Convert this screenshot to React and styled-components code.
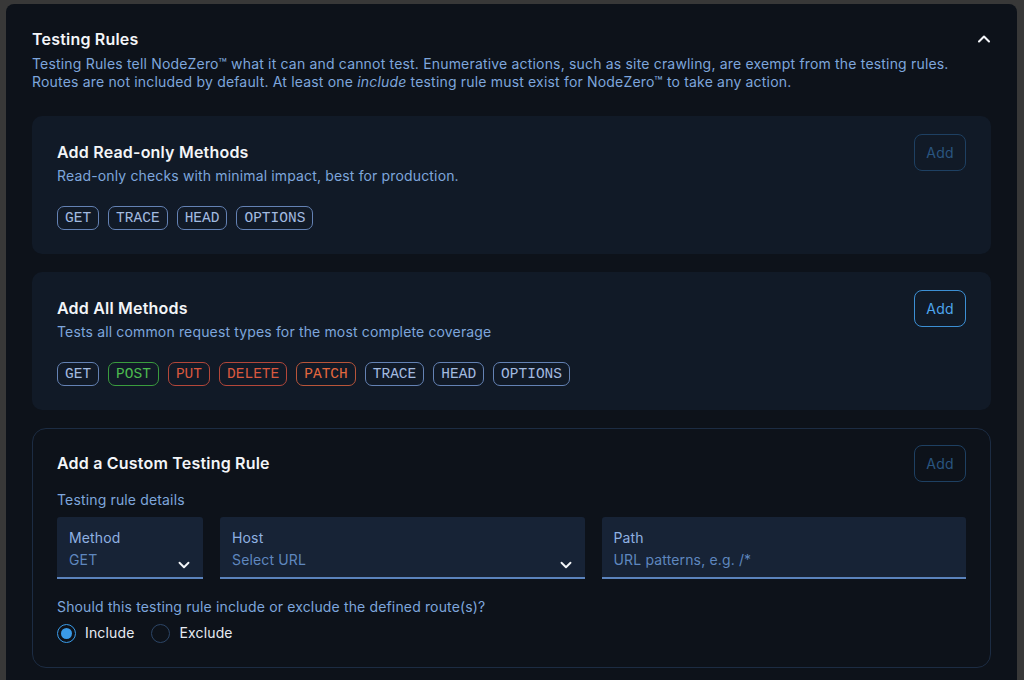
import React from 'react';
import styled, { createGlobalStyle } from 'styled-components';
import { ChevronUp, ChevronDown } from 'lucide-react';

const GlobalStyle = createGlobalStyle`
  html, body {
    margin: 0;
    padding: 0;
    background: #383838;
    font-family: Inter, "Noto Sans", sans-serif;
  }
  * { box-sizing: border-box; }
`;

const readOnly = ['GET', 'TRACE', 'HEAD', 'OPTIONS'];
const allMethods = ['GET', 'POST', 'PUT', 'DELETE', 'PATCH', 'TRACE', 'HEAD', 'OPTIONS'];

const chipTone = {
  POST: 'green',
  PUT: 'red',
  DELETE: 'red',
  PATCH: 'orange',
};

function MethodChips({ items }) {
  return (
    <ChipRow>
      {items.map((m) => (
        <Chip key={m} $tone={chipTone[m] || 'blue'}>{m}</Chip>
      ))}
    </ChipRow>
  );
}

function MethodCard({ title, text, items, active }) {
  return (
    <Card>
      <CardBody>
        <CardTitle>{title}</CardTitle>
        <CardText>{text}</CardText>
        <MethodChips items={items} />
      </CardBody>
      <AddButton $active={active}>Add</AddButton>
    </Card>
  );
}

function App() {
  return (
    <>
      <GlobalStyle />
      <Frame>
        <Panel>
          <Header>
            <div>
              <PanelTitle>Testing Rules</PanelTitle>
              <PanelText>
                Testing Rules tell NodeZero™ what it can and cannot test. Enumerative actions, such as site crawling, are exempt from the testing rules.
                <br />
                Routes are not included by default. At least one <em>include</em> testing rule must exist for NodeZero™ to take any action.
              </PanelText>
            </div>
            <Toggle>
              <ChevronUp size={20} strokeWidth={2.5} />
            </Toggle>
          </Header>

          <Stack>
            <MethodCard
              title="Add Read-only Methods"
              text="Read-only checks with minimal impact, best for production."
              items={readOnly}
            />
            <MethodCard
              title="Add All Methods"
              text="Tests all common request types for the most complete coverage"
              items={allMethods}
              active
            />

            <CustomCard>
              <CustomHead>
                <CardTitle>Add a Custom Testing Rule</CardTitle>
                <AddButton>Add</AddButton>
              </CustomHead>
              <SubLabel>Testing rule details</SubLabel>
              <Fields>
                <Field>
                  <FieldLabel>Method</FieldLabel>
                  <FieldValue>GET</FieldValue>
                  <Caret><ChevronDown size={18} strokeWidth={2.5} /></Caret>
                </Field>
                <Field>
                  <FieldLabel>Host</FieldLabel>
                  <FieldValue>Select URL</FieldValue>
                  <Caret><ChevronDown size={18} strokeWidth={2.5} /></Caret>
                </Field>
                <Field>
                  <FieldLabel>Path</FieldLabel>
                  <FieldValue>URL patterns, e.g. /*</FieldValue>
                </Field>
              </Fields>
              <Question>Should this testing rule include or exclude the defined route(s)?</Question>
              <Radios>
                <RadioOption>
                  <Radio $checked />
                  Include
                </RadioOption>
                <RadioOption>
                  <Radio />
                  Exclude
                </RadioOption>
              </Radios>
            </CustomCard>
          </Stack>
        </Panel>
      </Frame>
    </>
  );
}

export default App;

const Frame = styled.div`
  width: 1024px;
  height: 680px;
  padding: 4px 7px 0 6px;
  overflow: hidden;
`;

const Panel = styled.div`
  background: #0d121a;
  border-radius: 8px 8px 0 0;
  height: 700px;
  padding: 23px 26px 0 26px;
`;

const Header = styled.div`
  display: flex;
  justify-content: space-between;
  align-items: flex-start;
`;

const PanelTitle = styled.h2`
  margin: 0;
  font-size: 16px;
  line-height: 24px;
  font-weight: 600;
  color: #f3f5f8;
  letter-spacing: 0.2px;
`;

const PanelText = styled.p`
  margin: 4px 0 0 0;
  font-size: 14px;
  line-height: 18px;
  color: #7ea6dc;
  white-space: nowrap;
  letter-spacing: 0.18px;
`;

const Toggle = styled.span`
  color: #f3f5f8;
  display: flex;
  margin-top: 2px;
  margin-right: -3px;
`;

const Stack = styled.div`
  display: flex;
  flex-direction: column;
  gap: 18px;
  margin-top: 25px;
`;

const Card = styled.div`
  background: #111a27;
  border-radius: 10px;
  padding: 24px 25px 24px 25px;
  display: flex;
  justify-content: space-between;
  align-items: flex-start;
`;

const CardBody = styled.div`
  display: flex;
  flex-direction: column;
`;

const CardTitle = styled.h3`
  margin: 0;
  font-size: 16px;
  line-height: 24px;
  font-weight: 600;
  color: #f3f5f8;
  letter-spacing: 0.2px;
`;

const CardText = styled.p`
  margin: 2px 0 0 0;
  font-size: 14px;
  line-height: 20px;
  color: #7ea6dc;
  letter-spacing: 0.15px;
`;

const ChipRow = styled.div`
  display: flex;
  gap: 9px;
  margin-top: 20px;
`;

const tones = {
  blue: { border: '#6482b4', text: '#a3bbe0' },
  green: { border: '#3a9c3e', text: '#4cbb4f' },
  red: { border: '#b3473a', text: '#d9583f' },
  orange: { border: '#b8553a', text: '#e2683f' },
};

const Chip = styled.span`
  display: inline-flex;
  align-items: center;
  height: 24px;
  padding: 0 7px;
  border: 1.5px solid ${(p) => tones[p.$tone].border};
  border-radius: 7px;
  color: ${(p) => tones[p.$tone].text};
  font-family: "Liberation Mono", "DejaVu Sans Mono", monospace;
  font-size: 14.5px;
`;

const AddButton = styled.button`
  width: 52px;
  height: 37px;
  margin-top: -6px;
  border-radius: 8px;
  background: transparent;
  border: 1.5px solid ${(p) => (p.$active ? '#3c8fd4' : '#1e4062')};
  color: ${(p) => (p.$active ? '#4ea5ee' : '#2a5580')};
  font-family: Inter, "Noto Sans", sans-serif;
  font-size: 14px;
  letter-spacing: 0.2px;
  padding: 0;
`;

const CustomCard = styled.div`
  border: 1px solid #1c2c43;
  border-radius: 14px;
  padding: 22px 24px 24px 24px;
  display: flex;
  flex-direction: column;
`;

const CustomHead = styled.div`
  display: flex;
  justify-content: space-between;
  align-items: flex-start;
`;

const SubLabel = styled.div`
  font-size: 14px;
  line-height: 20px;
  color: #7ea6dc;
  margin-top: 8px;
  letter-spacing: 0.15px;
`;

const Fields = styled.div`
  display: grid;
  grid-template-columns: 146px 1fr 1fr;
  gap: 17px;
  margin-top: 7px;
`;

const Field = styled.div`
  position: relative;
  background: #172336;
  border-bottom: 2px solid #5b83bd;
  border-radius: 3px 3px 0 0;
  padding: 11px 12px 6px 12px;
  height: 62px;
`;

const FieldLabel = styled.div`
  font-size: 14px;
  line-height: 20px;
  color: #8fb1e2;
  letter-spacing: 0.15px;
`;

const FieldValue = styled.div`
  font-size: 14px;
  line-height: 24px;
  color: #5f87bf;
  letter-spacing: 0.15px;
`;

const Caret = styled.span`
  position: absolute;
  right: 10px;
  bottom: 3px;
  color: #f3f5f8;
  display: flex;
`;

const Question = styled.div`
  font-size: 14px;
  line-height: 20px;
  color: #7ea6dc;
  margin-top: 18px;
  letter-spacing: 0.15px;
`;

const Radios = styled.div`
  display: flex;
  gap: 17px;
  margin-top: 6px;
`;

const RadioOption = styled.label`
  display: flex;
  align-items: center;
  gap: 9px;
  font-size: 14px;
  line-height: 20px;
  color: #e6ebf2;
  letter-spacing: 0.15px;
`;

const Radio = styled.span`
  width: 19px;
  height: 19px;
  border-radius: 50%;
  border: 1.5px solid ${(p) => (p.$checked ? '#3a9be8' : '#2c4566')};
  display: flex;
  align-items: center;
  justify-content: center;
  &::after {
    content: '';
    width: 11px;
    height: 11px;
    border-radius: 50%;
    background: ${(p) => (p.$checked ? '#3a9be8' : 'transparent')};
  }
`;
